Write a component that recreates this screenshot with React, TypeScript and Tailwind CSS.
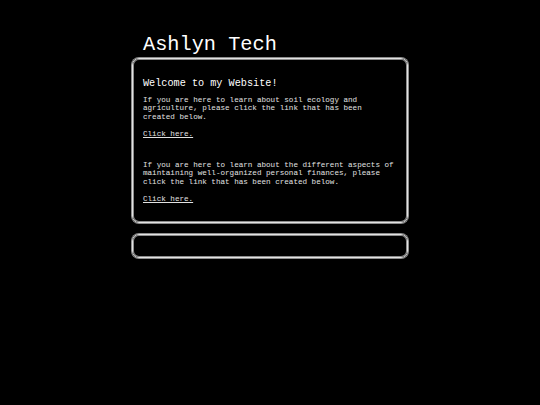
export default function App() {
  const mono = { fontFamily: '"Liberation Mono", "DejaVu Sans Mono", monospace' };
  const frame =
    "rounded-[7px] border border-[#e2e2e2] shadow-[0_0_0_1px_#8c8c8c,inset_0_0_0_1px_#8c8c8c]";
  return (
    <div className="min-h-[405px] w-full bg-black text-[#e2e2e2]" style={mono}>
      <div className="mx-auto w-[276px] pt-[33px]">
        <h1 className="pl-[11px] text-[20.3px] leading-[24px] text-white">Ashlyn Tech</h1>

        <main className={`mt-px ${frame} px-[10px] pt-[19px] pb-[19px]`}>
          <h2 className="text-[10.2px] leading-[12px] text-white">Welcome to my Website!</h2>

          <p className="mt-[6px] text-[7.6px] leading-[8.25px]">
            If you are here to learn about soil ecology and agriculture, please click the link that has been created below.
          </p>
          <a href="#" className="mt-[9px] block text-[7.6px] leading-[8.25px] underline underline-offset-1">
            Click here.
          </a>

          <p className="mt-[23px] text-[7.6px] leading-[8.25px]">
            If you are here to learn about the different aspects of maintaining well-organized personal finances, please click the link that has been created below.
          </p>
          <a href="#" className="mt-[9px] block text-[7.6px] leading-[8.25px] underline underline-offset-1">
            Click here.
          </a>
        </main>

        <footer className={`mt-[11px] h-[24px] ${frame}`} />
      </div>
    </div>
  );
}
